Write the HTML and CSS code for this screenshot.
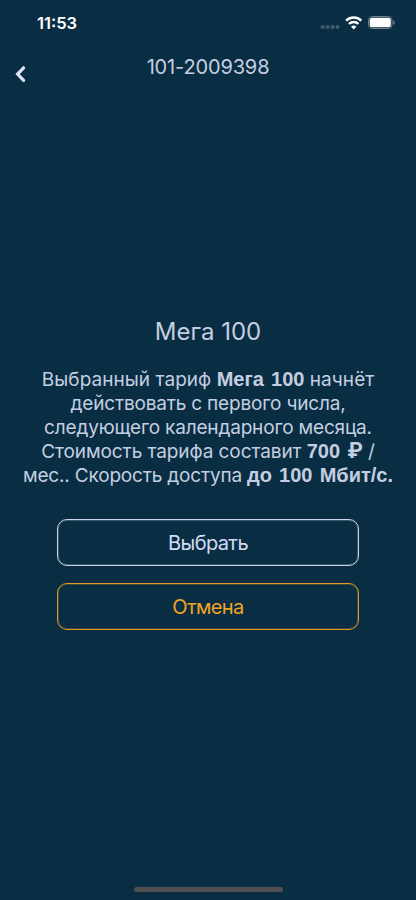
FILE: index.html
```html
<!DOCTYPE html>
<html lang="ru">
<head>
<meta charset="utf-8">
<title>Мега 100</title>
<link rel="stylesheet" href="styles.css">
</head>
<body>
<div class="screen">
  <div class="status">
    <span class="time">11:53</span>
    <svg class="indicators" width="78" height="20" viewBox="0 0 78 20">
      <g fill="#3f5b6e"><circle cx="4.6" cy="14" r="2.1"/><circle cx="9.6" cy="14" r="2.1"/><circle cx="14.6" cy="14" r="2.1"/><circle cx="19.6" cy="14" r="2.1"/></g>
      <g fill="none" stroke="#fff" stroke-width="2.5"><path d="M28.1 7.6a11 11 0 0 1 15.2 0"/><path d="M31 10.9a6.7 6.7 0 0 1 9.4 0"/></g>
      <path fill="#fff" d="M35.7 16.6l-2.7-2.8a3.9 3.9 0 0 1 5.4 0z"/>
      <rect x="50.5" y="3.5" width="23.5" height="12" rx="3.7" fill="none" stroke="#71828f"/>
      <rect x="51.7" y="4.7" width="21.1" height="9.6" rx="2.5" fill="#fff"/>
      <path fill="#71828f" d="M75.2 7.2c2 .8 2 3.8 0 4.6z"/>
    </svg>
  </div>
  <header class="header">
    <svg class="back" width="12" height="18" viewBox="0 0 12 18"><path d="M9.6 2.8L3.6 9.1l6 6.3" fill="none" stroke="#dfe3f4" stroke-width="3.2" stroke-linecap="round" stroke-linejoin="miter"/></svg>
    <h1 class="account">101-2009398</h1>
  </header>
  <main class="content">
    <h2 class="title">Мега 100</h2>
    <p class="text">
      <span class="line l1">Выбранный тариф <b>Мега 100</b> начнёт</span>
      <span class="line l2">действовать с первого числа,</span>
      <span class="line l3">следующего календарного месяца.</span>
      <span class="line l4">Стоимость тарифа составит <b>700 <span class="ruble">₽</span></b> /</span>
      <span class="line l5">мес.. Скорость доступа <b>до 100 Мбит/с.</b></span>
    </p>
    <button class="button">Выбрать</button>
    <button class="button cancel">Отмена</button>
  </main>
  <div class="home"></div>
</div>
</body>
</html>
```
FILE: styles.css
```css
* { box-sizing: border-box; }
body { margin: 0; background: #092e43; }
.screen {
  display: flex;
  flex-direction: column;
  align-items: center;
  width: 416px;
  height: 900px;
  overflow: hidden;
  background: #092e43;
  color: #c5cee0;
  font-family: Inter, "Liberation Sans", sans-serif;
}
.status {
  display: flex;
  justify-content: space-between;
  align-items: center;
  width: 100%;
  height: 44px;
  padding: 0 20px 0 37px;
}
.time { margin-top: 2px; color: #fff; font-size: 16.5px; font-weight: 600; line-height: 20px; }
.indicators { margin-top: 1px; }
.header {
  display: grid;
  grid-template-columns: 36px 1fr 36px;
  width: 100%;
  height: 46px;
}
.back { margin: 21px 0 0 14px; }
.account {
  margin: 11px 0 0;
  font-size: 20px;
  font-weight: 400;
  letter-spacing: -0.15px;
  line-height: 24px;
  text-align: center;
  white-space: nowrap;
}
.content {
  display: flex;
  flex-direction: column;
  align-items: center;
  width: 100%;
  margin-top: 227px;
}
.title { margin: 0; font-size: 24px; font-weight: 400; line-height: 30px; }
.text { margin: 20px 0 0; font-size: 19px; line-height: 24px; text-align: center; }
.line { display: flex; justify-content: center; align-items: baseline; height: 24px; white-space: pre; }
.l1 { letter-spacing: 0.05px; }
.l2, .l3, .l5 { letter-spacing: -0.18px; }
.l4 { letter-spacing: -0.08px; }
.text b {
  font-family: "Liberation Sans", sans-serif;
  font-weight: 700;
  font-size: 20px;
  letter-spacing: 0;
  word-spacing: 1.6px;
}
.text .ruble { font-family: Inter, sans-serif; font-size: 21px; line-height: 20px; }
.l2, .l3 { padding-top: 1px; }
.button {
  width: 302px;
  height: 47px;
  margin: 32px 0 0;
  padding: 0;
  border: 1px solid #cdd3e8;
  border-radius: 10px;
  box-shadow: inset 0 0 0 1px rgba(205, 211, 232, 0.25);
  background: transparent;
  color: #d3daf2;
  font: 400 20px/24px Inter, "Liberation Sans", sans-serif;
  letter-spacing: -0.6px;
}
.cancel {
  margin-top: 17px;
  border-color: #e39a27;
  box-shadow: inset 0 0 0 1px rgba(227, 154, 39, 0.25);
  color: #f2a324;
}
.home { width: 149px; height: 5px; margin-top: auto; margin-bottom: 8px; border-radius: 3px; background: #505050; }
```
